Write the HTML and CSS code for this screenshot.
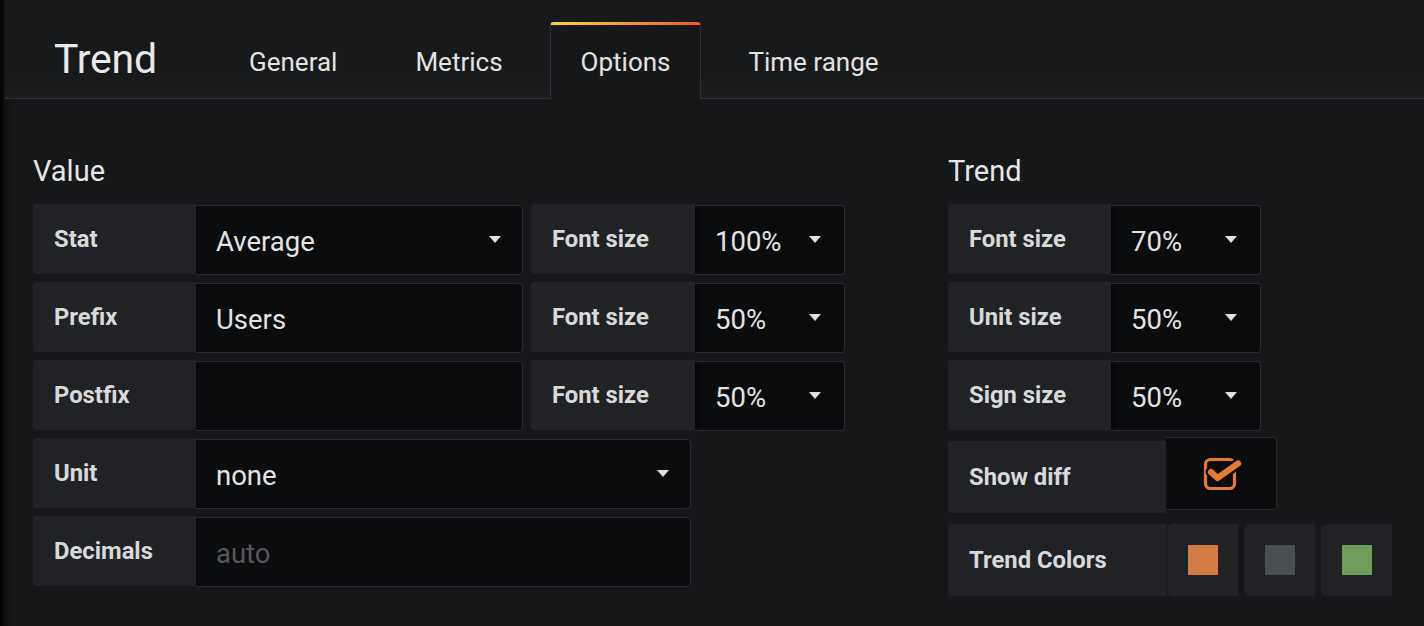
FILE: index.html
```html
<!DOCTYPE html>
<html lang="en">
<head>
<meta charset="utf-8">
<title>Trend - Options</title>
<link rel="stylesheet" href="styles.css">
</head>
<body>
<div class="page">
  <header class="header">
    <h1 class="title">Trend</h1>
    <nav class="tabs">
      <div class="tab">General</div>
      <div class="tab">Metrics</div>
      <div class="tab active">Options</div>
      <div class="tab">Time range</div>
    </nav>
  </header>

  <main class="options">
    <section class="section section-value">
      <h2 class="section-title">Value</h2>
      <div class="rows">
        <div class="row">
          <div class="group">
            <div class="label w163">Stat</div>
            <div class="field select w327"><span class="val">Average</span><span class="caret"></span></div>
          </div>
          <div class="group">
            <div class="label w164">Font size</div>
            <div class="field select w150"><span class="val">100%</span><span class="caret"></span></div>
          </div>
        </div>
        <div class="row">
          <div class="group">
            <div class="label w163">Prefix</div>
            <div class="field w327"><span class="val">Users</span></div>
          </div>
          <div class="group">
            <div class="label w164">Font size</div>
            <div class="field select w150"><span class="val">50%</span><span class="caret"></span></div>
          </div>
        </div>
        <div class="row">
          <div class="group">
            <div class="label w163">Postfix</div>
            <div class="field w327"><span class="val"></span></div>
          </div>
          <div class="group">
            <div class="label w164">Font size</div>
            <div class="field select w150"><span class="val">50%</span><span class="caret"></span></div>
          </div>
        </div>
        <div class="row">
          <div class="group">
            <div class="label w163">Unit</div>
            <div class="field select w495"><span class="val">none</span><span class="caret"></span></div>
          </div>
        </div>
        <div class="row">
          <div class="group">
            <div class="label w163">Decimals</div>
            <div class="field w495"><span class="val placeholder">auto</span></div>
          </div>
        </div>
      </div>
    </section>

    <section class="section section-trend">
      <h2 class="section-title">Trend</h2>
      <div class="rows">
        <div class="row">
          <div class="group">
            <div class="label w163">Font size</div>
            <div class="field select w150"><span class="val">70%</span><span class="caret"></span></div>
          </div>
        </div>
        <div class="row">
          <div class="group">
            <div class="label w163">Unit size</div>
            <div class="field select w150"><span class="val">50%</span><span class="caret"></span></div>
          </div>
        </div>
        <div class="row">
          <div class="group">
            <div class="label w163">Sign size</div>
            <div class="field select w150"><span class="val">50%</span><span class="caret"></span></div>
          </div>
        </div>
        <div class="row row-tall row-diff">
          <div class="group">
            <div class="label w218">Show diff</div>
            <div class="checkbox-box">
              <svg class="check-icon" width="42" height="42" viewBox="0 0 42 42" aria-hidden="true">
                <rect x="4.5" y="7.5" width="29" height="29" rx="5" fill="none" stroke="#e47b2e" stroke-width="3.2"/>
                <path d="M10 20 L16.5 26 L37 11.5" fill="none" stroke="#0b0c0e" stroke-width="11" stroke-linecap="round" stroke-linejoin="round"/>
                <path d="M10 20 L16.5 26 L37 11.5" fill="none" stroke="#e47b2e" stroke-width="6.2" stroke-linecap="round" stroke-linejoin="round"/>
              </svg>
            </div>
          </div>
        </div>
        <div class="row row-tall row-colors">
          <div class="group">
            <div class="label w218">Trend Colors</div>
            <div class="swatches">
              <div class="swatch-box"><span class="swatch orange"></span></div>
              <div class="swatch-box"><span class="swatch gray"></span></div>
              <div class="swatch-box"><span class="swatch green"></span></div>
            </div>
          </div>
        </div>
      </div>
    </section>
  </main>
</div>
</body>
</html>
```

FILE: styles.css
```css
* { box-sizing: border-box; }

html, body {
  margin: 0;
  padding: 0;
  background: #161719;
}

body {
  font-family: Roboto, "Noto Sans", "Liberation Sans", sans-serif;
  color: #d8d9da;
}

.page {
  width: 1424px;
  height: 626px;
  overflow: hidden;
  background: #161719;
  border-left: 3px solid #060607;
  box-shadow: inset 8px 0 8px -6px rgba(0, 0, 0, 0.55);
}

/* ---------- header ---------- */
.header {
  display: flex;
  align-items: flex-end;
  height: 99px;
  padding-left: 49px;
  background: linear-gradient(180deg, #18191b 0%, #18191b 75%, #1b1c1e 100%);
  border-bottom: 1px solid #2f3033;
  margin-left: 2px;
}

.title {
  margin: 0 61px 0 0;
  height: 77px;
  line-height: 77px;
  font-size: 41px;
  font-weight: 400;
  color: #e9e9ea;
  letter-spacing: -0.2px;
}

.tabs {
  display: flex;
  align-items: flex-end;
  gap: 16px;
  margin-bottom: -1px;
}

.tab {
  height: 77px;
  padding: 0 30px;
  line-height: 74px;
  font-size: 26px;
  color: #e3e3e4;
  border: 1px solid transparent;
  border-top-width: 3px;
  border-bottom: 0;
  border-radius: 4px 4px 0 0;
}

.tab.active {
  border-color: #2e2f32;
  border-top-color: transparent;
  background: linear-gradient(90deg, #fbd443 0%, #f5a033 45%, #ef5a26 100%) 0 0 / 100% 3px no-repeat border-box, #161719;
}

/* ---------- options ---------- */
.options {
  display: flex;
  padding: 58px 0 0 30px;
}

.section-value {
  width: 812px;
  margin-right: 103px;
}

.section-title {
  margin: 0 0 18px 0;
  font-size: 29px;
  line-height: 1;
  height: 29px;
  font-weight: 400;
  color: #e6e6e7;
}

.rows {
  display: flex;
  flex-direction: column;
  gap: 8px;
}

.row {
  display: flex;
  gap: 8px;
  height: 70px;
}

.group {
  display: flex;
  height: 100%;
}

.label {
  display: flex;
  align-items: center;
  height: 100%;
  padding-left: 21px;
  background: #212226;
  border-radius: 4px 0 0 4px;
  font-size: 23.8px;
  font-weight: 700;
  color: #d8d9da;
  white-space: nowrap;
}

.field {
  display: flex;
  align-items: center;
  justify-content: space-between;
  height: 100%;
  margin-top: 1px;
  padding: 0 21px 0 20px;
  background: #0b0c0e;
  border: 1px solid #2a2b2f;
  border-left: 0;
  border-radius: 0 4px 4px 0;
  box-shadow: inset 6px 0 6px -5px rgba(0, 0, 0, 0.6);
}

.val {
  font-size: 27.5px;
  color: #e3e3e4;
  padding-top: 3px;
}

.val.placeholder { color: #56575b; }

.caret {
  width: 0;
  height: 0;
  border-left: 6px solid transparent;
  border-right: 6px solid transparent;
  border-top: 7px solid #e0e0e1;
  margin-top: -2px;
}

.w150 .caret { margin-right: 2px; }

.w150 { width: 150px; }
.w163 { width: 163px; }
.w164 { width: 164px; }
.w218 { width: 218px; }
.w327 { width: 327px; }
.w495 { width: 495px; }

/* ---------- trend ---------- */
.row-tall { height: 72px; }
.row-diff { margin-top: 3px; }
.row-colors { margin-top: 3px; }

.checkbox-box {
  display: flex;
  align-items: center;
  justify-content: center;
  width: 111px;
  height: 73px;
  margin-top: -4px;
  background: #0b0c0e;
  border: 1px solid #26272a;
  border-left: 0;
  border-radius: 0 4px 4px 0;
}

.check-icon { display: block; margin-left: 2px; margin-top: -2px; }

.swatches {
  display: flex;
  gap: 6px;
  margin-left: 1px;
}

.swatch-box {
  display: flex;
  align-items: center;
  justify-content: center;
  width: 71px;
  height: 72px;
  background: #212226;
  border-radius: 6px 0 0 6px;
}

.swatch {
  display: block;
  width: 30px;
  height: 30px;
}

.swatch.orange { background: #d67c43; }
.swatch.gray { background: #464f52; }
.swatch.green { background: #6e9c5a; }
```
